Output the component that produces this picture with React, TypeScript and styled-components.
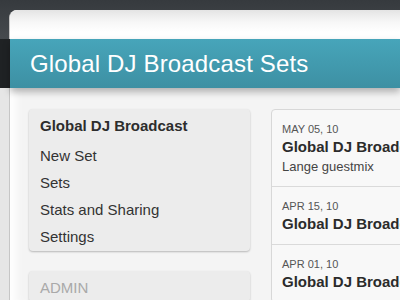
import styled, { createGlobalStyle } from 'styled-components'

const GlobalStyle = createGlobalStyle`
    html, body {
        margin: 0;
        height: 100%;
        overflow: hidden;
    }
    body {
        font-family: "Liberation Sans", Arial, Helvetica, sans-serif;
        background: linear-gradient(to bottom, #363a3e 0, #3a3e42 10px, #464a4e 39px, #e6e6e6 39px);
    }
`

const Page = styled.div`
    padding: 10px 0 0 9px;
    height: 100vh;
    box-sizing: border-box;
`

const Card = styled.div`
    height: 100%;
    background: #f4f4f4;
    border-left: 1px solid #c6c6c6;
    border-top-left-radius: 8px;
    box-shadow: inset 12px 0 10px -6px #ffffff;
`

const CardTop = styled.div`
    height: 29px;
    border-top-left-radius: 8px;
    background: linear-gradient(to bottom, #e4e4e4 0, #f7f7f7 12px, #ffffff 22px);
`

const Banner = styled.div`
    display: flex;
    height: 49px;
    margin-left: -10px;
    position: relative;
    z-index: 1;
`

const Fold = styled.div`
    width: 10px;
    background: #1f2224;
`

const Bar = styled.h1`
    flex: 1;
    margin: 0;
    padding-left: 20px;
    background: linear-gradient(to bottom, #47a5ba 0, #3d90a3 100%);
    box-shadow: 0 4px 7px rgba(0, 0, 0, 0.28);
    color: #ffffff;
    font-size: 24px;
    font-weight: normal;
    letter-spacing: 0.15px;
    line-height: 49px;
    white-space: nowrap;
`

const Content = styled.div`
    display: grid;
    grid-template-columns: 221px 1fr;
    gap: 21px;
    padding: 21px 0 0 19px;
`

const SideColumn = styled.div`
    display: flex;
    flex-direction: column;
    gap: 20px;
`

const NavBox = styled.div`
    background: #ececec;
    border-radius: 4px;
    box-shadow: 0 1px 2px rgba(0, 0, 0, 0.25);
    padding: 3px 11px 1px;
`

const NavTitle = styled.div`
    font-size: 15px;
    font-weight: bold;
    line-height: 27px;
    margin-bottom: 3px;
    color: #2d2d2d;
`

const NavItem = styled.div<{ $muted?: boolean }>`
    font-size: 15px;
    line-height: 27px;
    color: ${p => (p.$muted ? '#a9a9a9' : '#333333')};
    text-transform: ${p => (p.$muted ? 'uppercase' : 'none')};
`

const SetList = styled.div`
    margin-right: -30px;
    background: #f8f8f8;
    border: 1px solid #d8d8d8;
    border-radius: 4px;
    white-space: nowrap;
    overflow: hidden;
`

const SetRow = styled.div`
    padding: 11px 10px 10px;
    & + & {
        border-top: 1px solid #dadada;
    }
`

const SetDate = styled.div`
    font-size: 11px;
    line-height: 16px;
    color: #555555;
    text-transform: uppercase;
`

const SetTitle = styled.div`
    font-size: 15px;
    font-weight: bold;
    line-height: 20px;
    color: #2b2b2b;
`

const SetNote = styled.div`
    font-size: 13px;
    line-height: 19px;
    color: #444444;
`

type SetItem = {
    date: string
    title: string
    note?: string
}

const sets: SetItem[] = [
    { date: 'May 05, 10', title: 'Global DJ Broadcast', note: 'Lange guestmix' },
    { date: 'Apr 15, 10', title: 'Global DJ Broadcast' },
    { date: 'Apr 01, 10', title: 'Global DJ Broadcast' },
]

const navItems = ['New Set', 'Sets', 'Stats and Sharing', 'Settings']

export default function App() {
    return (
        <>
            <GlobalStyle/>
            <Page>
                <Card>
                    <CardTop/>
                    <Banner>
                        <Fold/>
                        <Bar>Global DJ Broadcast Sets</Bar>
                    </Banner>
                    <Content>
                        <SideColumn>
                            <NavBox>
                                <NavTitle>Global DJ Broadcast</NavTitle>
                                {navItems.map(item => (
                                    <NavItem key={item}>{item}</NavItem>
                                ))}
                            </NavBox>
                            <NavBox>
                                <NavItem $muted>Admin</NavItem>
                            </NavBox>
                        </SideColumn>
                        <SetList>
                            {sets.map((s, index) => (
                                <SetRow key={index}>
                                    <SetDate>{s.date}</SetDate>
                                    <SetTitle>{s.title}</SetTitle>
                                    {s.note && <SetNote>{s.note}</SetNote>}
                                </SetRow>
                            ))}
                        </SetList>
                    </Content>
                </Card>
            </Page>
        </>
    )
}
